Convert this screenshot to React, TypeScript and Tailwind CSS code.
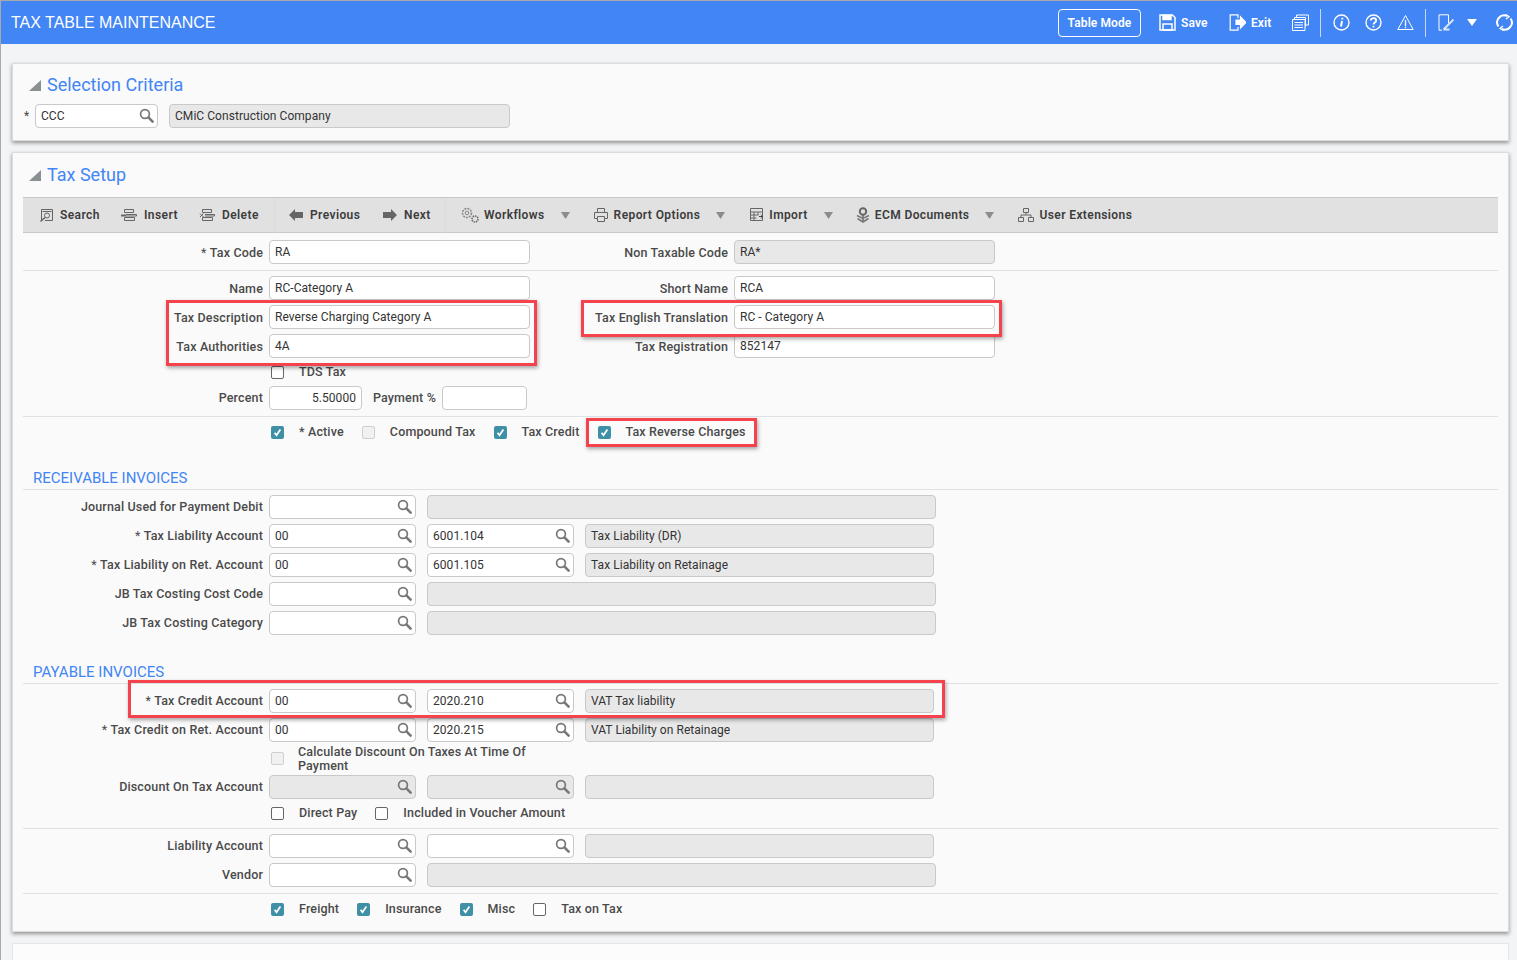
import React from "react";

const labelText = "text-[12.5px] tracking-[0.15px] font-medium text-[#4a4a4a] whitespace-nowrap";

const Glass = () => (
  <svg width="15" height="15" viewBox="0 0 15 15" fill="none" stroke="#777" className="shrink-0 -mt-px">
    <circle cx="6" cy="6" r="4.4" strokeWidth="1.7" />
    <path d="M9.4 9.4 13.6 13.6" strokeWidth="2.6" strokeLinecap="round" />
  </svg>
);

function Field({
  w,
  value,
  search,
  off,
  right,
}: {
  w: string;
  value?: string;
  search?: boolean;
  off?: boolean;
  right?: boolean;
}) {
  return (
    <div
      className={`${w} h-[24px] shrink-0 flex items-center pl-[5px] pr-[3px] rounded-[4px] border border-[#c9c9c9] text-[12px] tracking-[0.05px] text-[#333] ${
        off ? "bg-[#e8e8e8]" : "bg-white"
      } ${right ? "justify-end pr-[5px]" : "justify-between"}`}
    >
      <span className="whitespace-nowrap -mt-px">{value}</span>
      {search && <Glass />}
    </div>
  );
}

function Label({ text, star, low }: { text: string; star?: boolean; low?: boolean }) {
  return (
    <div className={`w-[240px] mr-[6px] shrink-0 text-right ${labelText} ${low ? "pt-[2px]" : ""}`}>
      {star && <span className="font-normal">* </span>}
      {text}
    </div>
  );
}

function Right({ text }: { text: string }) {
  return <div className={`w-[198px] mr-[6px] pt-[2px] shrink-0 text-right ${labelText}`}>{text}</div>;
}

function Check({ on, off, last, text }: { on?: boolean; off?: boolean; last?: boolean; text: string }) {
  return (
    <div className={`flex items-center ${last ? "" : "mr-[18px]"}`}>
      <Box on={on} off={off} />
      <span className={`ml-[15px] ${labelText}`}>{text}</span>
    </div>
  );
}

function Box({ on, off }: { on?: boolean; off?: boolean }) {
  if (on) {
    return (
      <div className="w-[13px] h-[13px] shrink-0 rounded-[2px] bg-[#3f8fa6] flex items-center justify-center">
        <svg width="9" height="9" viewBox="0 0 9 9" fill="none" stroke="#fff" strokeWidth="1.8">
          <path d="M1.6 4.8 3.5 7.2 7.4 1.4" />
        </svg>
      </div>
    );
  }
  return (
    <div
      className={`w-[13px] h-[13px] shrink-0 rounded-[2px] border ${
        off ? "border-[#cfcfcf] bg-[#f1f1f1]" : "border-[#666] bg-white"
      }`}
    />
  );
}

const Sep = () => <div className="h-px bg-[#dde2e6]" />;

function Triangle() {
  return (
    <svg width="12" height="11" viewBox="0 0 12 11" className="shrink-0">
      <path d="M12 0V11H0Z" fill="#8a8f91" />
    </svg>
  );
}

function Caret({ cls }: { cls: string }) {
  return (
    <svg width="9" height="7" viewBox="0 0 9 7" className={cls}>
      <path d="M0 0H9L4.5 7Z" fill="#8c8c8c" />
    </svg>
  );
}

const Ic = ({ children, w = 16 }: { children: React.ReactNode; w?: number }) => (
  <svg width={w} height="16" viewBox={`0 0 ${w} 16`} fill="none" stroke="#666" strokeWidth="1" className="shrink-0">
    {children}
  </svg>
);

function Tool({ icon, text, cls }: { icon: React.ReactNode; text: string; cls: string }) {
  return (
    <div className={`flex items-center ${cls}`}>
      {icon}
      <span className="text-[12px] tracking-[0.4px] font-semibold text-[#3c3c3c] whitespace-nowrap">{text}</span>
    </div>
  );
}

function Toolbar() {
  return (
    <div className="h-[36px] mx-[10px] flex items-center bg-[#e1e1e1] border-y border-[#c8c8c8] pl-[16px]">
      <Tool
        cls="w-[82px] gap-[6px]"
        text="Search"
        icon={
          <Ic w={15}>
            <path d="M2.5 13V2.5h11v11H6" />
            <path d="M3.5 4.500h9" />
            <circle cx="8" cy="8.500" r="2.500" />
            <path d="M6 10.500 1.500 14.500" strokeWidth="1.500" />
          </Ic>
        }
      />
      <Tool
        cls="w-[78px] gap-[7px]"
        text="Insert"
        icon={
          <Ic>
            <path d="M3.500 2.500h9v3h-9zM3.500 10.500h10v3h-10z" />
            <path d="M5 7.500h10.500v1.500H5" />
            <path d="M0 8.500h5" strokeWidth="2" />
          </Ic>
        }
      />
      <Tool
        cls="w-[75px] gap-[7px]"
        text="Delete"
        icon={
          <Ic>
            <path d="M3.500 2.500h9v3h-9zM3.500 10.500h10v3h-10zM6 7.500h9.500v1.500H6" />
            <path d="M1 6.500 4.500 10M4.500 6.500 1 10" />
          </Ic>
        }
      />
      <div className="w-px h-[35px] bg-[#d8dde0] mr-[14px]" />
      <Tool
        cls="w-[94px] gap-[7px]"
        text="Previous"
        icon={
          <svg width="14" height="12" viewBox="0 0 14 12" className="shrink-0">
            <path d="M0 6 6 0V3H14V9H6V12Z" fill="#666" />
          </svg>
        }
      />
      <Tool
        cls="w-[62px] gap-[7px]"
        text="Next"
        icon={
          <svg width="14" height="12" viewBox="0 0 14 12" className="shrink-0">
            <path d="M14 6 8 0V3H0V9H8V12Z" fill="#666" />
          </svg>
        }
      />
      <div className="w-px h-[35px] bg-[#d8dde0] mr-[15px]" />
      <Tool
        cls="gap-[4px]"
        text="Workflows"
        icon={
          <Ic w={19}>
            <circle cx="6" cy="6" r="4.500" strokeDasharray="2 1" stroke="#888" strokeWidth="1.500" />
            <circle cx="6" cy="6" r="1.800" stroke="#888" />
            <circle cx="14" cy="12" r="3" stroke="#666" strokeDasharray="1.500 .8" strokeWidth="1.500" />
          </Ic>
        }
      />
      <Caret cls="ml-[16px] mr-[24px]" />
      <Tool
        cls="gap-[6px]"
        text="Report Options"
        icon={
          <Ic w={14}>
            <path d="M3.500 5.500v-4h7v4M3 11.500H.5v-6h13v6H11" />
            <path d="M3.500 9.500h7v5h-7z" />
          </Ic>
        }
      />
      <Caret cls="ml-[16px] mr-[25px]" />
      <Tool
        cls="gap-[6px]"
        text="Import"
        icon={
          <Ic w={13}>
            <path d="M.5 1.500h12v12H.5zM.5 5h12M.5 8h8M.5 11h6M4 5v8.500M8 5v3" />
            <path d="M9 9.500h4M11 7.500l2 2-2 2" stroke="#444" />
          </Ic>
        }
      />
      <Caret cls="ml-[16px] mr-[23px]" />
      <Tool
        cls="gap-[5px]"
        text="ECM Documents"
        icon={
          <Ic w={14}>
            <circle cx="7" cy="4.500" r="3.200" strokeWidth="2" />
            <path d="M7 8v7" strokeWidth="1.500" />
            <path d="M1 8.500l6 3 6-3M1.500 11.500 7 15l5.500-3.500" strokeWidth="1.500" stroke="#777" />
          </Ic>
        }
      />
      <Caret cls="ml-[16px] mr-[24px]" />
      <Tool
        cls="gap-[5px]"
        text="User Extensions"
        icon={
          <Ic>
            <path d="M5.500 1.500h5v4h-5zM.500 10.500h5v4h-5zM10.500 10.500h5v4h-5z" />
            <path d="M8 5.500V8M3 10.500V8h10v2.500" />
          </Ic>
        }
      />
    </div>
  );
}

function HeaderBar() {
  const s = { width: 17, height: 17, viewBox: "0 0 17 17", fill: "none", stroke: "#fff" };
  return (
    <div className="h-[43px] bg-[#4285f4] flex items-center pl-[10px] text-white">
      <div className="text-[16px] font-['Liberation_Sans',sans-serif]">TAX TABLE MAINTENANCE</div>
      <div className="ml-auto flex items-center text-[12px] tracking-[0.1px] font-semibold">
        <div className="w-[83px] h-[28px] rounded-[4px] border border-white flex items-center justify-center">Table Mode</div>
        <svg {...s} className="ml-[18px] shrink-0" strokeWidth="1.500">
          <path d="M1 1h12.500L16 3.500V16H1z" />
          <path d="M4 1.500h8v4H4z" fill="#fff" />
          <path d="M4 10h9v6H4z" />
        </svg>
        <span className="ml-[5px] w-[27px]">Save</span>
        <svg {...s} className="ml-[21px] shrink-0" strokeWidth="1.200">
          <path d="M9 4V.8H1.200v15.400H9V13" />
          <path d="M7 6h4.500V2.800L17 8.500 11.500 14v-3.500H7z" fill="#fff" />
        </svg>
        <span className="ml-[5px] w-[23px]">Exit</span>
        <svg {...s} className="ml-[18px] shrink-0">
          <path d="M4.500 3.500V1h12v10H14" />
          <path d="M2.500 5.500V3.500h11v9" />
          <path d="M.5 5.500h12.500v11H.5zM2.500 8.500h8.500M2.500 11h8.500M2.500 13.500h8.500" />
        </svg>
        <div className="w-px h-[28px] bg-[#c7d9f5] ml-[11px]" />
        <svg {...s} className="ml-[12px] shrink-0" strokeWidth="1.400">
          <circle cx="8.500" cy="8.500" r="7.500" />
          <path d="M9 7l-1 5.500M9.300 3.800v1.600" strokeWidth="2" />
        </svg>
        <svg {...s} className="ml-[15px] shrink-0" strokeWidth="1.400">
          <circle cx="8.500" cy="8.500" r="7.500" />
          <path d="M5.800 6.500c0-3.300 5.400-3.300 5.400 0 0 2-2.700 2-2.700 4M8.500 11.700v1.800" strokeWidth="1.800" />
        </svg>
        <svg {...s} className="ml-[15px] shrink-0">
          <path d="M8.500 1.500 16.200 15.500H.8Z" />
          <path d="M8.500 6v6M8.500 12.800v1.500" strokeWidth="1.300" />
        </svg>
        <div className="w-px h-[28px] bg-[#c7d9f5] ml-[11px]" />
        <svg {...s} className="ml-[12px] shrink-0">
          <path d="M10.500 9V.8H1v15.400h3" />
          <path d="M5.500 15.500 15.500 5.500M5.500 15.500h6" strokeWidth="1.800" stroke="#d9e6fb" />
        </svg>
        <svg width="10" height="7" viewBox="0 0 10 7" className="ml-[12px] shrink-0">
          <path d="M0 0H10L5 7Z" fill="#fff" />
        </svg>
        <svg {...s} className="ml-[19px] mr-[4px] shrink-0" strokeWidth="2">
          <path d="M2.500 12.500A7 7 0 0 1 11 2" />
          <path d="M14.500 4.500A7 7 0 0 1 6 15" />
          <path d="M9.500 .5 13 2.500 10 5M7.500 16.500 4 14.500 7 12" strokeWidth="1.300" />
        </svg>
      </div>
    </div>
  );
}

function Row({ cls, children }: { cls?: string; children: React.ReactNode }) {
  return <div className={`flex items-center h-[24px] ${cls ?? ""}`}>{children}</div>;
}

function Account({
  label,
  star,
  seg,
  acct,
  desc,
  off,
  cls,
}: {
  label: string;
  star?: boolean;
  seg?: string;
  acct?: string;
  desc?: string;
  off?: boolean;
  cls?: string;
}) {
  return (
    <Row cls={cls}>
      <Label text={label} star={star} />
      <Field w="w-[147px]" value={seg} search off={off} />
      <div className="w-[11px] shrink-0" />
      <Field w="w-[147px]" value={acct} search off={off} />
      <div className="w-[11px] shrink-0" />
      <Field w="w-[349px]" value={desc} off />
    </Row>
  );
}

function Single({ label, star, cls }: { label: string; star?: boolean; cls?: string }) {
  return (
    <Row cls={cls}>
      <Label text={label} star={star} />
      <Field w="w-[147px]" search />
      <div className="w-[11px] shrink-0" />
      <Field w="w-[509px]" off />
    </Row>
  );
}

const Highlight = ({ cls }: { cls: string }) => (
  <div className={`absolute border-[3px] border-[#f4434c] shadow-[1px_2px_4px_rgba(0,0,0,0.35)] pointer-events-none ${cls}`} />
);

export default function App() {
  return (
    <div className="relative h-screen overflow-hidden bg-[#f3f4f5] border-t border-l border-[#a9a9a9] font-['Roboto',sans-serif]">
      <HeaderBar />
      <div className="pl-[11px] pr-[8px]">
        <div className="mt-[19px] h-[78px] bg-[#fafafa] border border-[#dcdcdc] shadow-[0_2px_4px_rgba(0,0,0,0.4)]">
          <div className="flex items-center h-[24px] mt-[9px] pl-[16px] gap-[6px]">
            <Triangle />
            <span className="text-[18px] text-[#4285f4] leading-none">Selection Criteria</span>
          </div>
          <div className="flex items-center mt-[7px] pl-[11px]">
            <span className="w-[11px] text-[12px] text-[#444]">*</span>
            <Field w="w-[123px]" value="CCC" search />
            <div className="w-[11px]" />
            <Field w="w-[341px]" value="CMiC Construction Company" off />
          </div>
        </div>

        <div className="mt-[11px] h-[780px] bg-[#fafafa] border border-[#dcdcdc] shadow-[0_2px_4px_rgba(0,0,0,0.4)]">
          <div className="flex items-center h-[24px] mt-[10px] pl-[16px] gap-[6px]">
            <Triangle />
            <span className="text-[18px] text-[#4285f4] leading-none">Tax Setup</span>
          </div>
          <div className="mt-[10px]">
            <Toolbar />
          </div>
          <div className="mx-[10px]">
            <Row cls="mt-[7px]">
              <Label text="Tax Code" star low />
              <Field w="w-[261px]" value="RA" />
              <Right text="Non Taxable Code" />
              <Field w="w-[261px]" value="RA*" off />
            </Row>
            <div className="mt-[6px]">
              <Sep />
            </div>
            <Row cls="mt-[5px]">
              <Label text="Name" low />
              <Field w="w-[261px]" value="RC-Category A" />
              <Right text="Short Name" />
              <Field w="w-[261px]" value="RCA" />
            </Row>
            <Row cls="mt-[5px]">
              <Label text="Tax Description" low />
              <Field w="w-[261px]" value="Reverse Charging Category A" />
              <Right text="Tax English Translation" />
              <Field w="w-[261px]" value="RC - Category A" />
            </Row>
            <Row cls="mt-[5px]">
              <Label text="Tax Authorities" low />
              <Field w="w-[261px]" value="4A" />
              <Right text="Tax Registration" />
              <Field w="w-[261px]" value="852147" />
            </Row>
            <div className="flex items-center h-[14px] mt-[7px] pl-[248px]">
              <Check text="TDS Tax" last />
            </div>
            <Row cls="mt-[7px]">
              <Label text="Percent" />
              <Field w="w-[93px]" value="5.50000" right />
              <div className={`w-[74px] mr-[6px] shrink-0 text-right ${labelText}`}>Payment %</div>
              <Field w="w-[85px]" />
            </Row>
            <div className="mt-[6px]">
              <Sep />
            </div>
            <div className="flex items-center h-[14px] mt-[8px] pl-[248px]">
              <Check on text="* Active" />
              <Check off text="Compound Tax" />
              <Check on text="Tax Credit" />
              <Check on text="Tax Reverse Charges" last />
            </div>

            <div className="mt-[29px] pl-[10px] text-[15px] leading-[20px] text-[#4285f4]">RECEIVABLE INVOICES</div>
            <div className="mt-[1px]">
              <Sep />
            </div>
            <Single label="Journal Used for Payment Debit" cls="mt-[5px]" />
            <Account label="Tax Liability Account" star seg="00" acct="6001.104" desc="Tax Liability (DR)" cls="mt-[5px]" />
            <Account label="Tax Liability on Ret. Account" star seg="00" acct="6001.105" desc="Tax Liability on Retainage" cls="mt-[5px]" />
            <Single label="JB Tax Costing Cost Code" cls="mt-[5px]" />
            <Single label="JB Tax Costing Category" cls="mt-[5px]" />

            <div className="mt-[27px] pl-[10px] text-[15px] leading-[20px] text-[#4285f4]">PAYABLE INVOICES</div>
            <div className="mt-[1px]">
              <Sep />
            </div>
            <Account label="Tax Credit Account" star seg="00" acct="2020.210" desc="VAT Tax liability" cls="mt-[5px]" />
            <Account label="Tax Credit on Ret. Account" star seg="00" acct="2020.215" desc="VAT Liability on Retainage" cls="mt-[5px]" />
            <div className="flex h-[28px] mt-[3px] pl-[248px]">
              <div className="mt-[7px]">
                <Box off />
              </div>
              <div className="ml-[14px] w-[240px] text-[12.5px] tracking-[0.15px] leading-[14px] font-medium text-[#4a4a4a]">
                Calculate Discount On Taxes At Time Of Payment
              </div>
            </div>
            <Account label="Discount On Tax Account" off cls="mt-[2px]" />
            <div className="flex items-center h-[14px] mt-[7px] pl-[248px]">
              <Check text="Direct Pay" />
              <Check text="Included in Voucher Amount" last />
            </div>
            <div className="mt-[8px]">
              <Sep />
            </div>
            <Account label="Liability Account" cls="mt-[5px]" />
            <Single label="Vendor" cls="mt-[5px]" />
            <div className="mt-[6px]">
              <Sep />
            </div>
            <div className="flex items-center h-[14px] mt-[8px] pl-[248px]">
              <Check on text="Freight" />
              <Check on text="Insurance" />
              <Check on text="Misc" />
              <Check text="Tax on Tax" last />
            </div>
          </div>
        </div>

        <div className="mt-[11px] h-[60px] bg-[#fcfcfc] border border-[#e6e6e6]" />
      </div>

      <Highlight cls="left-[165px] top-[299px] w-[371px] h-[66px]" />
      <Highlight cls="left-[580px] top-[299px] w-[421px] h-[37px]" />
      <Highlight cls="left-[585px] top-[417px] w-[171px] h-[29px]" />
      <Highlight cls="left-[127px] top-[679px] w-[817px] h-[38px]" />
    </div>
  );
}
